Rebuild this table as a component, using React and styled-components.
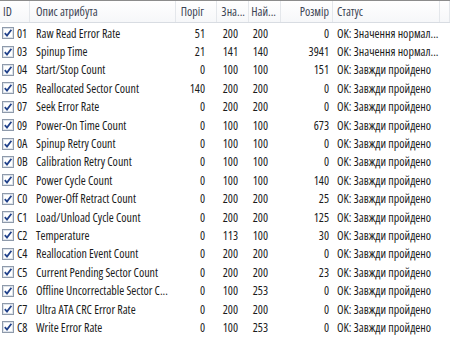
import styled, { createGlobalStyle } from "styled-components";

const GlobalStyle = createGlobalStyle`
  html, body {
    margin: 0;
    padding: 0;
    background: #ffffff;
  }
  body {
    font-family: "Open Sans", "Liberation Sans", sans-serif;
    font-stretch: 75%;
  }
`;

const COLUMNS = "30px 146px 41px 32px 32px 52px 107px 1fr";

const StyledListDiv = styled.div`
  width: 450px;
  height: 350px;
  overflow: hidden;
  border-top: 1px solid #8c8c8c;
  box-sizing: border-box;
  background: #ffffff;
`;

const StyledHeaderDiv = styled.div`
  display: grid;
  grid-template-columns: ${COLUMNS};
  height: 21px;
  background: linear-gradient(#ffffff, #f6f7f9);
  border-bottom: 1px solid #d8dce2;
`;

const StyledHeaderCell = styled.div`
  display: flex;
  align-items: center;
  justify-content: ${(p) => (p.$right ? "flex-end" : "flex-start")};
  padding: ${(p) => p.$pad || "0 4px"};
  border-right: 1px solid #e4e7eb;
  font-size: 12px;
  color: #3c4454;
  white-space: nowrap;
  overflow: hidden;
`;

const StyledBodyDiv = styled.div`
  display: flex;
  flex-direction: column;
  padding-top: 1px;
`;

const StyledRowDiv = styled.div`
  display: grid;
  grid-template-columns: ${COLUMNS};
  height: 18.4px;
  align-items: center;
  font-size: 12px;
  color: #1b1b1b;
`;

const StyledCell = styled.div`
  display: flex;
  align-items: center;
  justify-content: ${(p) => (p.$right ? "flex-end" : "flex-start")};
  padding: ${(p) => p.$pad || "0 4px"};
  white-space: nowrap;
  overflow: hidden;
`;

const StyledIdCell = styled.div`
  display: flex;
  align-items: center;
  gap: 3px;
  padding-left: 2px;
`;

function CheckBox() {
  return (
    <svg width="12" height="12" viewBox="0 0 12 12">
      <rect x="0.5" y="0.5" width="11" height="11" fill="#f4f6f9" stroke="#8e9aab" />
      <rect x="1.5" y="1.5" width="9" height="9" fill="#ffffff" stroke="#dde3ea" />
      <path d="M2.8 6.2 L5 8.6 L9.4 2.8" fill="none" stroke="#21428b" strokeWidth="1.8" />
    </svg>
  );
}

const OK_NORM = "OK: Значення нормал...";
const OK_PASS = "OK: Завжди пройдено";

const rows = [
  ["01", "Raw Read Error Rate", 51, 200, 200, 0, OK_NORM],
  ["03", "Spinup Time", 21, 141, 140, 3941, OK_NORM],
  ["04", "Start/Stop Count", 0, 100, 100, 151, OK_PASS],
  ["05", "Reallocated Sector Count", 140, 200, 200, 0, OK_PASS],
  ["07", "Seek Error Rate", 0, 200, 200, 0, OK_PASS],
  ["09", "Power-On Time Count", 0, 100, 100, 673, OK_PASS],
  ["0A", "Spinup Retry Count", 0, 100, 100, 0, OK_PASS],
  ["0B", "Calibration Retry Count", 0, 100, 100, 0, OK_PASS],
  ["0C", "Power Cycle Count", 0, 100, 100, 140, OK_PASS],
  ["C0", "Power-Off Retract Count", 0, 200, 200, 25, OK_PASS],
  ["C1", "Load/Unload Cycle Count", 0, 200, 200, 125, OK_PASS],
  ["C2", "Temperature", 0, 113, 100, 30, OK_PASS],
  ["C4", "Reallocation Event Count", 0, 200, 200, 0, OK_PASS],
  ["C5", "Current Pending Sector Count", 0, 200, 200, 23, OK_PASS],
  ["C6", "Offline Uncorrectable Sector C...", 0, 100, 253, 0, OK_PASS],
  ["C7", "Ultra ATA CRC Error Rate", 0, 200, 200, 0, OK_PASS],
  ["C8", "Write Error Rate", 0, 100, 253, 0, OK_PASS],
];

export default function App() {
  return (
    <>
      <GlobalStyle />
      <StyledListDiv>
        <StyledHeaderDiv>
          <StyledHeaderCell $pad="0 3px">ID</StyledHeaderCell>
          <StyledHeaderCell $pad="0 6px">Опис атрибута</StyledHeaderCell>
          <StyledHeaderCell $right $pad="0 12px 0 0">Поріг</StyledHeaderCell>
          <StyledHeaderCell $right $pad="0 3px 0 0">Зна...</StyledHeaderCell>
          <StyledHeaderCell $right $pad="0 4px 0 0">Най...</StyledHeaderCell>
          <StyledHeaderCell $right $pad="0 3px 0 0">Розмір</StyledHeaderCell>
          <StyledHeaderCell $pad="0 4px">Статус</StyledHeaderCell>
          <StyledHeaderCell />
        </StyledHeaderDiv>
        <StyledBodyDiv>
          {rows.map((r) => (
            <StyledRowDiv key={r[0]}>
              <StyledIdCell>
                <CheckBox />
                <span>{r[0]}</span>
              </StyledIdCell>
              <StyledCell $pad="0 6px">{r[1]}</StyledCell>
              <StyledCell $right $pad="0 12px 0 0">{r[2]}</StyledCell>
              <StyledCell $right $pad="0 11px 0 0">{r[3]}</StyledCell>
              <StyledCell $right $pad="0 13px 0 0">{r[4]}</StyledCell>
              <StyledCell $right $pad="0 4px 0 0">{r[5]}</StyledCell>
              <StyledCell $pad="0 4px">{r[6]}</StyledCell>
              <StyledCell />
            </StyledRowDiv>
          ))}
        </StyledBodyDiv>
      </StyledListDiv>
    </>
  );
}
